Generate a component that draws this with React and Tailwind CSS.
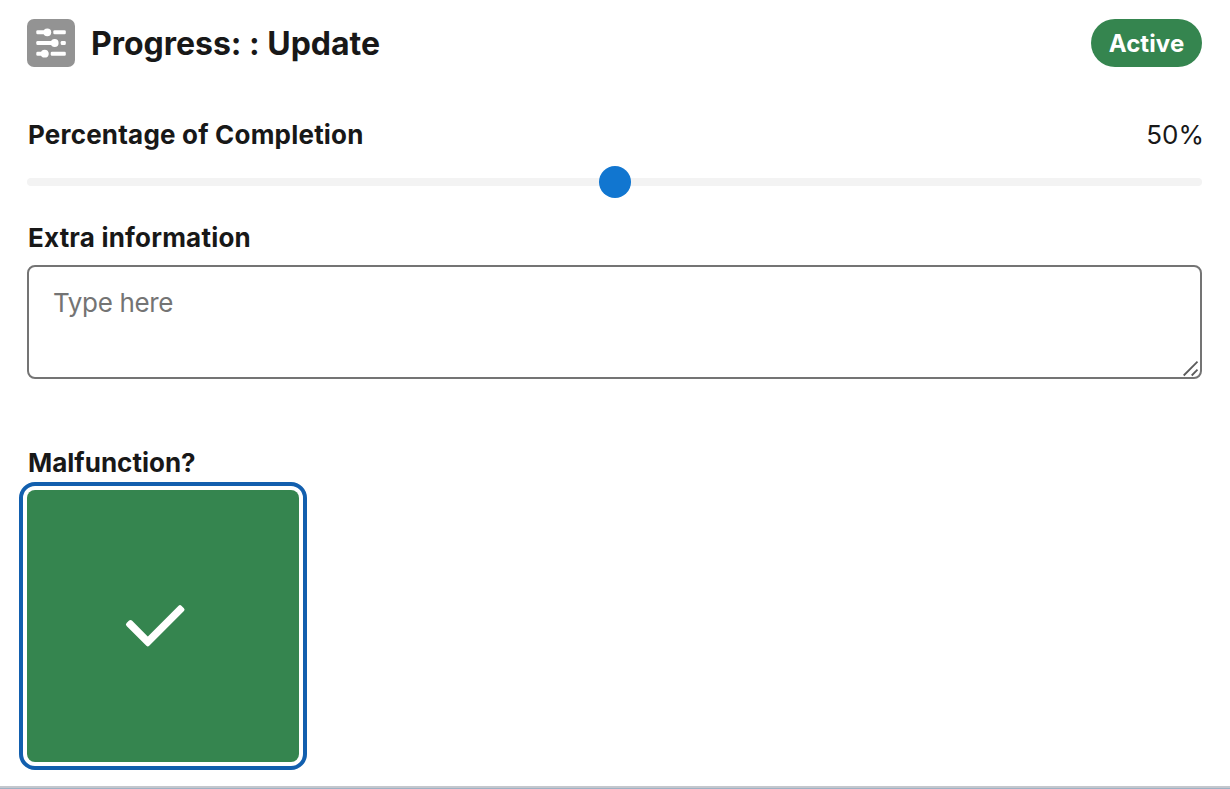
import { useState } from "react";

function SlidersIcon() {
  return (
    <svg viewBox="0 0 48 48" className="w-12 h-12 shrink-0" aria-hidden="true">
      <rect width="48" height="48" rx="7" fill="#939393" />
      <g fill="#fff">
        <rect x="9.3" y="11.3" width="14.7" height="4" rx="1.3" />
        <circle cx="20.3" cy="13.3" r="3.9" />
        <rect x="26.3" y="11.3" width="12.5" height="4" rx="1.3" />
        <rect x="9.3" y="22" width="21" height="4" rx="1.3" />
        <circle cx="27.7" cy="24" r="3.9" />
        <rect x="33.7" y="22" width="5.1" height="4" rx="1.3" />
        <rect x="9.3" y="32.7" width="12" height="4" rx="1.3" />
        <circle cx="17.7" cy="34.7" r="3.9" />
        <rect x="23.7" y="32.7" width="15.1" height="4" rx="1.3" />
      </g>
    </svg>
  );
}

function CheckIcon() {
  return (
    <svg viewBox="0 0 64 48" className="w-16 h-12 mr-4" aria-hidden="true">
      <path
        d="M5 22.5 L7.5 20 L24.8 37.4 L57 5.2 L59.5 7.7 L24.8 42.4 Z"
        fill="#fff"
        stroke="#fff"
        strokeWidth="4"
        strokeLinejoin="round"
      />
    </svg>
  );
}

export default function App() {
  const [percentage] = useState(50);
  const [info, setInfo] = useState("");
  const [malfunction, setMalfunction] = useState(true);

  return (
    <div className="h-screen flex flex-col justify-between overflow-hidden bg-white text-[#181818] text-[26px] leading-9 font-['Inter',sans-serif]">
      <main className="pl-[27px] pr-7 pt-[19px]">
        <header className="flex items-center justify-between h-12">
          <div className="flex items-center gap-4">
            <SlidersIcon />
            <h1 className="pt-0.5 text-[32px] font-bold tracking-[-0.02px] whitespace-nowrap">
              Progress: : Update
            </h1>
          </div>
          <span className="flex items-center justify-center w-[111px] h-12 pt-0.5 rounded-full bg-[#35854f] text-white text-2xl font-bold tracking-[0.1px]">
            Active
          </span>
        </header>

        <div className="flex justify-between mt-[50px] pl-px">
          <span className="font-bold tracking-[0.2px]">Percentage of Completion</span>
          <span className="-mr-0.5">{percentage}%</span>
        </div>
        <div className="flex items-center justify-center h-8 mt-[13px]">
          <div className="flex-1 h-2 rounded-l-full bg-[#f3f3f3]" />
          <div className="relative w-8 h-8 -mx-px rounded-full bg-[#1176d0]" />
          <div className="flex-1 h-2 rounded-r-full bg-[#f3f3f3]" />
        </div>

        <label htmlFor="info" className="block mt-[22px] pl-px font-bold tracking-[0.2px]">
          Extra information
        </label>
        <div className="relative h-[114px] mt-[9px]">
          <textarea
            id="info"
            value={info}
            onChange={(e) => setInfo(e.target.value)}
            placeholder="Type here"
            className="block w-full h-full resize-none rounded-lg border-2 border-[#747474] px-6 py-[18px] tracking-[-0.35px] outline-none placeholder:text-[#747474]"
          />
          <svg
            viewBox="0 0 16 16"
            className="absolute right-[3px] bottom-[2px] w-4 h-4"
            aria-hidden="true"
          >
            <path d="M0.7 14.5 L14.5 0.7 M8.7 14.5 L14.5 8.7" stroke="#5c5c5c" strokeWidth="1.8" />
          </svg>
        </div>

        <div className="mt-[66px] pl-px font-bold">Malfunction?</div>
        <button
          onClick={() => setMalfunction(!malfunction)}
          className="flex items-center justify-center w-[272px] h-[272px] mt-[9px] rounded-lg bg-[#35854f] outline-4 outline-offset-4 outline-[#125fae]"
        >
          {malfunction && <CheckIcon />}
        </button>
      </main>
      <div className="h-[3px] border-t-2 border-[#c4c7cd] bg-[#9fb1c4]" />
    </div>
  );
}
